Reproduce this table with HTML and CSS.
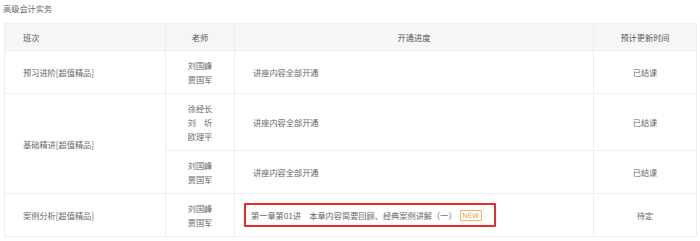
FILE: index.html
```html
<!DOCTYPE html>
<html lang="zh">
<head>
<meta charset="utf-8">
<link rel="stylesheet" href="styles.css">
</head>
<body>
<div class="page">
  <div class="title">高级会计实务</div>
  <table class="plan">
    <colgroup>
      <col class="c-class">
      <col class="c-teacher">
      <col class="c-progress">
      <col class="c-time">
    </colgroup>
    <thead>
      <tr>
        <th class="left">班次</th>
        <th>老师</th>
        <th>开通进度</th>
        <th>预计更新时间</th>
      </tr>
    </thead>
    <tbody>
      <tr>
        <td class="left">预习进阶[超值精品]</td>
        <td class="center">刘国峰<br>贾国军</td>
        <td class="left">讲座内容全部开通</td>
        <td class="center">已结课</td>
      </tr>
      <tr>
        <td class="left" rowspan="2">基础精讲[超值精品]</td>
        <td class="center">徐经长<br>刘　圻<br>欧理平</td>
        <td class="left">讲座内容全部开通</td>
        <td class="center">已结课</td>
      </tr>
      <tr>
        <td class="center">刘国峰<br>贾国军</td>
        <td class="left">讲座内容全部开通</td>
        <td class="center">已结课</td>
      </tr>
      <tr>
        <td class="left">案例分析[超值精品]</td>
        <td class="center">刘国峰<br>贾国军</td>
        <td class="left"><span class="mark">第一章第01讲　本章内容简要回顾、经典案例讲解（一）<span class="new">NEW</span></span></td>
        <td class="center">待定</td>
      </tr>
    </tbody>
  </table>
</div>
</body>
</html>
```
FILE: styles.css
```css
html, body {
  margin: 0;
  padding: 0;
  background: #fff;
}
.page {
  padding: 1px 5px 0 3px;
  font-family: "Noto Sans CJK SC", "Microsoft YaHei", sans-serif;
  font-size: 8.2px;
  line-height: 14px;
  color: #666;
}
.title {
  margin-bottom: 8px;
}
.plan {
  border-collapse: collapse;
  table-layout: fixed;
  width: 692px;
  margin-left: 1px;
}
.c-class { width: 161px; }
.c-teacher { width: 69px; }
.c-progress { width: 359px; }
.c-time { width: 103px; }
.plan th,
.plan td {
  border: 1px solid #eeeeee;
  padding: 7px 0;
  text-align: center;
  vertical-align: middle;
  font-weight: normal;
}
.plan th {
  background: #f6f6f6;
  color: #555;
  padding: 6px 0;
}
.plan .left {
  text-align: left;
  padding-left: 18px;
}
.mark {
  display: inline-block;
  margin-left: -9px;
  padding: 3px 12px 3px 5px;
  border: 2px solid #e82a2a;
  border-radius: 1px;
}
.new {
  display: inline-block;
  margin-left: 3px;
  padding: 0 2px;
  border: 1px solid #f7b36b;
  color: #f49a3c;
  font-family: "Liberation Sans", Arial, sans-serif;
  font-size: 7px;
  line-height: 9px;
  vertical-align: 1px;
}
```
